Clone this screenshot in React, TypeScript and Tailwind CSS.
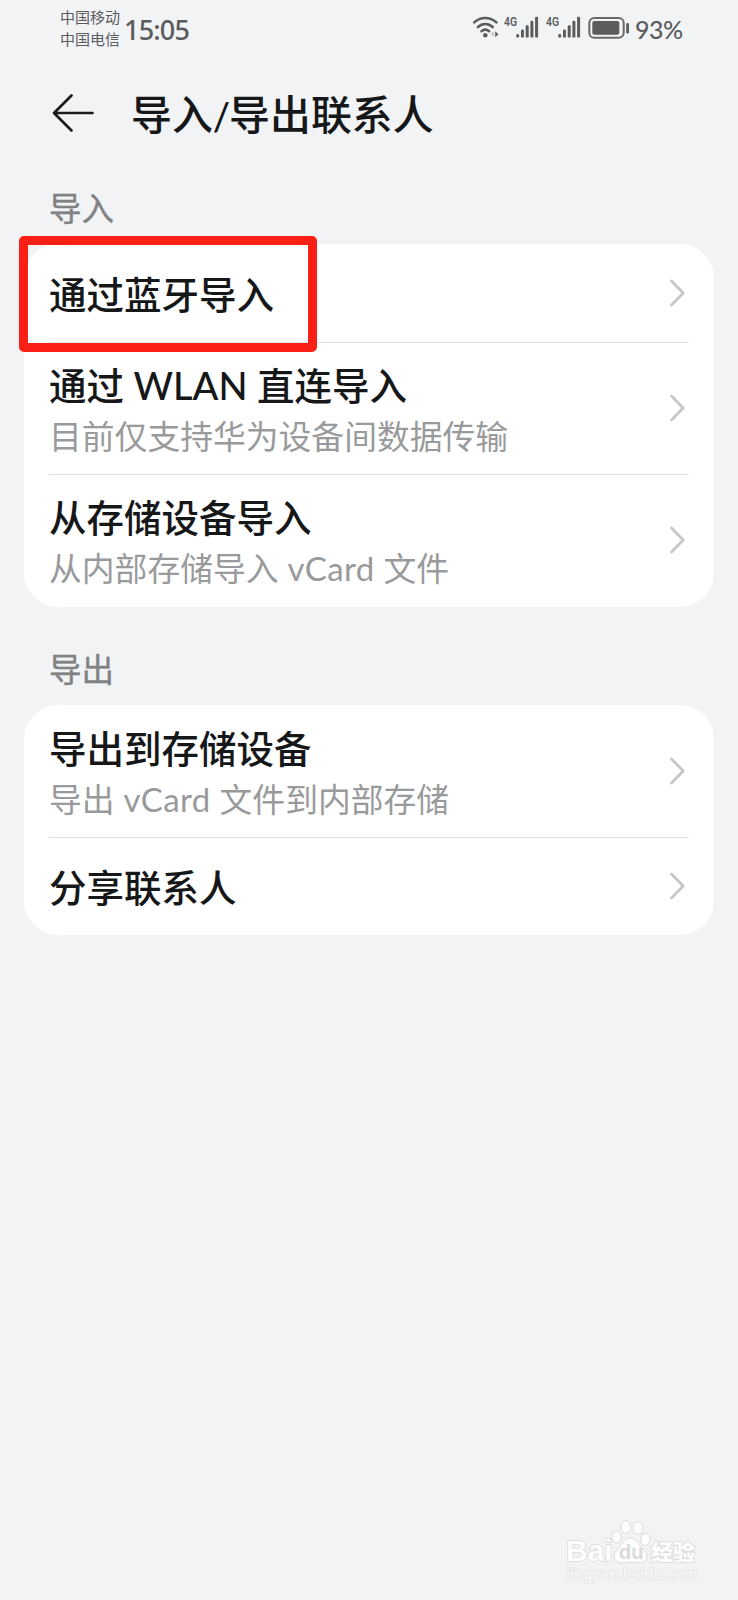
import React from "react";

const CJK = "font-['Noto_Sans_CJK_SC',sans-serif]";

function Wifi() {
  return (
    <svg width="28" height="24" viewBox="0 0 28 24" fill="none" stroke="#5b5c5e" strokeWidth="2.6" strokeLinecap="round">
      <path d="M2.2 6.4C8.500 .6 18 .6 24.400 6.400" />
      <path d="M5.900 11C10.200 7 16.400 7 20.700 11" />
      <path d="M9.500 15.200C11.900 13.100 14.700 13.100 17.100 15.200" />
      <circle cx="13.300" cy="19.300" r="2.300" fill="#5b5c5e" stroke="none" />
      <path d="M21.600 15.500v5l-2.600-2.500z" fill="#b5b6b8" stroke="none" />
      <path d="M23.200 15.200v6l3.300-3z" fill="#5b5c5e" stroke="none" />
    </svg>
  );
}

function Signal() {
  return (
    <div className="flex h-[22px] w-[35px] items-start">
      <span className="-mt-px w-[12px] origin-left scale-x-[0.8] font-['Roboto',sans-serif] text-[13px] leading-[14px] font-semibold text-[#5b5c5e]">
        4G
      </span>
      <svg width="23" height="22" viewBox="0 0 23 22" fill="#5b5c5e" className="shrink-0">
        <rect x="0.300" y="18" width="2.800" height="3.600" rx="1.200" />
        <rect x="5" y="13.500" width="2.900" height="8.100" rx="1.200" />
        <rect x="9.700" y="9.300" width="3" height="12.300" rx="1.200" />
        <rect x="14.400" y="4.800" width="3" height="16.800" rx="1.200" />
        <rect x="19.100" y="0.800" width="3" height="20.800" rx="1.200" />
      </svg>
    </div>
  );
}

function Battery() {
  return (
    <svg width="43" height="24" viewBox="0 0 43 24">
      <rect x="1.300" y="2" width="34.400" height="19.800" rx="5" fill="none" stroke="#68696b" strokeWidth="2" />
      <rect x="4.300" y="5" width="27" height="13.800" rx="2" fill="#5b5c5e" />
      <rect x="38.200" y="7" width="2.800" height="10.400" rx="1.200" fill="#5b5c5e" />
    </svg>
  );
}

function Chevron() {
  return (
    <svg width="18" height="30" viewBox="0 0 18 30" fill="none" stroke="#c6c6c6" strokeWidth="2.700" strokeLinecap="round" strokeLinejoin="round" className="shrink-0">
      <path d="M2.500 3L14.200 15L2.500 27" />
    </svg>
  );
}

function Row({ title, sub, last }: { title: React.ReactNode; sub?: React.ReactNode; last?: boolean }) {
  const height = sub ? (last ? "h-[131px]" : "h-[132px]") : last ? "h-[97px]" : "h-[98px]";
  return (
    <div className={`flex items-center justify-between pr-[2px] pb-px ${height} ${last ? "" : "border-b border-[#e0e1e2]"}`}>
      <div className="flex flex-col whitespace-nowrap">
        <div className="h-[54px] text-[37.500px] leading-[54px] font-medium text-[#161718]">{title}</div>
        {sub && <div className="h-[48px] text-[32.800px] leading-[48px] text-[#999a9b]">{sub}</div>}
      </div>
      <Chevron />
    </div>
  );
}

function Latin({ children, className }: { children: string; className: string }) {
  return <span className={`font-['Lato',sans-serif] leading-none ${className}`}>{children}</span>;
}

function VCard() {
  return <Latin className="mx-[1.500px] text-[33px] font-normal tracking-[0.400px]">vCard</Latin>;
}

export default function App() {
  return (
    <div className={`relative flex h-[1600px] w-[738px] flex-col bg-[#f2f3f5] ${CJK}`}>
      <header className="flex h-[60px] items-start justify-between pr-[55px] pl-[60px] text-[#5b5c5e]">
        <div className="flex">
          <div className="mt-[6px] text-[15px] leading-[22px]">
            <div>中国移动</div>
            <div>中国电信</div>
          </div>
          <div className="ml-[4px] mt-[12px] font-['Noto_Sans',sans-serif] text-[27px] leading-[36px] font-medium tracking-[-0.800px]">15:05</div>
        </div>
        <div className="mt-[16px] flex items-start">
          <Wifi />
          <div className="ml-[4px]"><Signal /></div>
          <div className="ml-[7px]"><Signal /></div>
          <div className="ml-[7px]"><Battery /></div>
          <div className="-mt-[5px] ml-[4px] w-[48px] font-['Lato',sans-serif] text-[25px] leading-[36px] font-medium tracking-[-0.500px] whitespace-nowrap">93%</div>
        </div>
      </header>

      <div className="flex h-[106px] items-center pl-[52px]">
        <svg width="44" height="40" viewBox="0 0 44 40" fill="none" stroke="#1a1b1d" strokeWidth="2.700" strokeLinecap="round" strokeLinejoin="round">
          <path d="M19.500 2.500L2 20L19.500 37.500M2 20H40.500" />
        </svg>
        <h1 className="ml-[35px] text-[40.900px] leading-[60px] font-medium whitespace-nowrap text-[#161718]">
          导入<Latin className="-mr-px text-[38px]">/</Latin>导出联系人
        </h1>
      </div>

      <h2 className="mt-[16px] h-[62px] pl-[49px] text-[32.500px] leading-[50px] text-[#818284] [-webkit-text-stroke:0.400px_#818284]">导入</h2>
      <section className="mx-[24px] h-[363px] rounded-[34px] bg-white px-[25px] pt-px">
        <Row title="通过蓝牙导入" />
        <Row
          title={<>通过 <Latin className="mx-px text-[38px]">WLAN</Latin> 直连导入</>}
          sub="目前仅支持华为设备间数据传输"
        />
        <Row title="从存储设备导入" sub={<>从内部存储导入 <VCard /> 文件</>} last />
      </section>

      <h2 className="mt-[36px] h-[62px] pl-[49px] text-[32.500px] leading-[50px] text-[#818284] [-webkit-text-stroke:0.400px_#818284]">导出</h2>
      <section className="mx-[24px] h-[230px] rounded-[34px] bg-white px-[25px] pt-px">
        <Row title="导出到存储设备" sub={<>导出 <VCard /> 文件到内部存储</>} />
        <Row title="分享联系人" last />
      </section>

      <div className="absolute top-[236px] left-[19px] h-[116px] w-[298px] rounded-[5px] border-[9px] border-[#fb2015]" />

      <div className="absolute top-[1518px] left-[566px] w-[150px] text-[#fcfdfd]">
        <div className="flex h-[46px] items-end">
          <span className="w-[46px] font-['Liberation_Sans',sans-serif] text-[30px] leading-[27px] font-bold [-webkit-text-stroke:1.500px_#d9dadc] [paint-order:stroke_fill]">Bai</span>
          <svg width="39" height="46" viewBox="0 0 39 46" fill="#fcfdfd" stroke="#d9dadc" strokeWidth="1" className="shrink-0 overflow-visible">
            <ellipse cx="4.500" cy="19" rx="4.800" ry="6" />
            <ellipse cx="13.800" cy="9" rx="5" ry="6.500" />
            <ellipse cx="26" cy="10" rx="5" ry="6.500" />
            <ellipse cx="33.300" cy="21.500" rx="4.800" ry="6" />
            <path d="M18.500 20C25 20 26 27 32 32C38 38 35 45 27 45C22 44 17 44 11 45C2 45 0 38 4 33C9 28 12 20 18.500 20Z" />
            <text x="7" y="41" fontFamily="Liberation Sans" fontSize="20" fontWeight="700" fill="#d9dadc" stroke="none">du</text>
          </svg>
          <span className="text-[22px] leading-[28px] font-black whitespace-nowrap [-webkit-text-stroke:1.500px_#d9dadc] [paint-order:stroke_fill]">经验</span>
        </div>
        <div className="font-['Noto_Sans',sans-serif] text-[15px] leading-[18px] tracking-[0.100px] whitespace-nowrap [-webkit-text-stroke:1.300px_#dfe0e2] [paint-order:stroke_fill]">jingyan.baidu.com</div>
      </div>
    </div>
  );
}
